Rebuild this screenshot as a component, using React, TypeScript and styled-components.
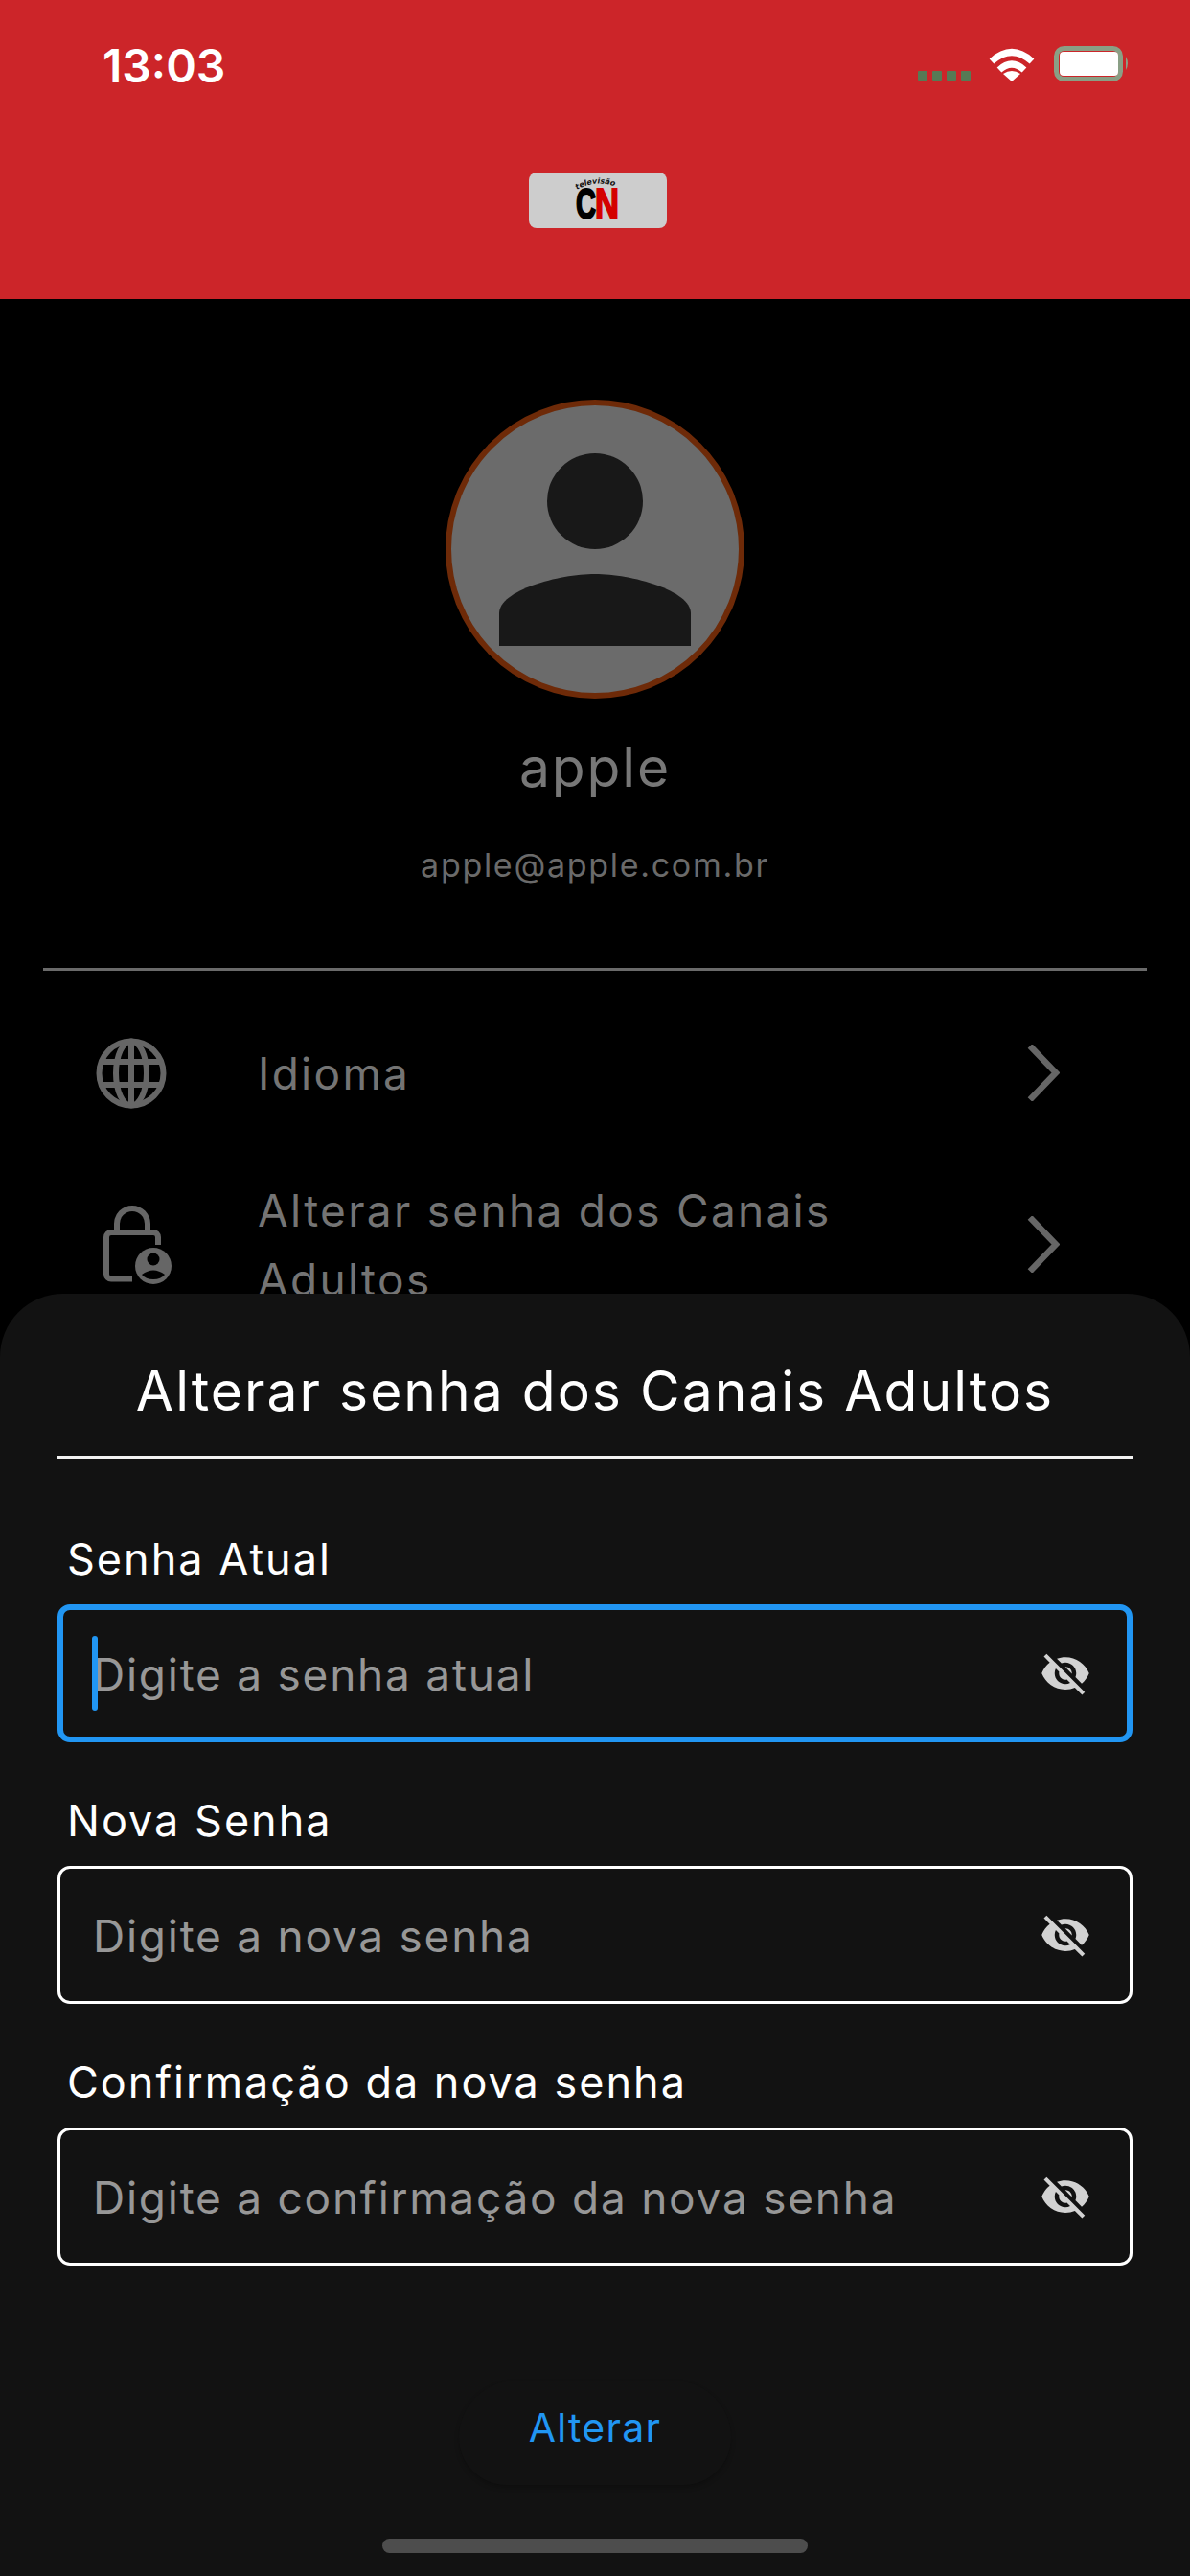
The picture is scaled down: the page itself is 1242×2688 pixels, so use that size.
import React from "react";
import styled, { createGlobalStyle } from "styled-components";

const Global = createGlobalStyle`
  html, body { margin: 0; padding: 0; background: #000; }
  * { box-sizing: border-box; }
`;

const FONT = `Inter, "Noto Sans", "Liberation Sans", sans-serif`;

const Screen = styled.div`
  position: relative;
  width: 1242px;
  height: 2688px;
  overflow: hidden;
  background: #000;
  font-family: ${FONT};
`;

const Header = styled.header`
  height: 312px;
  background: #cc2529;
  display: flex;
  flex-direction: column;
  align-items: center;
`;

const StatusBar = styled.div`
  width: 100%;
  height: 180px;
  padding: 44px 63px 0 107px;
  display: flex;
  justify-content: space-between;
  align-items: flex-start;
`;

const Time = styled.span`
  margin-top: 2px;
  font-size: 48px;
  line-height: 46px;
  font-weight: 600;
  color: #fff;
`;

const StatusIcons = styled.div`
  display: flex;
  align-items: flex-end;
  padding-top: 5px;
  height: 41px;
`;

const SignalDots = styled.div`
  display: flex;
  gap: 5px;
  margin-right: 19px;
  margin-bottom: 1px;
`;

const SignalDot = styled.i`
  width: 10px;
  height: 10px;
  border-radius: 1px;
  background: #567a55;
`;

const WifiIcon = styled.svg`
  width: 48px;
  height: 36px;
  margin-right: 20px;
`;

const BatteryIcon = styled.svg`
  width: 79px;
  height: 37px;
`;

const LogoBadge = styled.div`
  width: 144px;
  height: 58px;
  margin-left: 6px;
  border-radius: 8px;
  background: #cdcdcd;
  display: flex;
  align-items: center;
  justify-content: center;
`;

const LogoMark = styled.svg`
  width: 46px;
  height: 40px;
  overflow: visible;
`;

const Profile = styled.main`
  padding-top: 105px;
  display: flex;
  flex-direction: column;
  align-items: center;
`;

const Avatar = styled.div`
  width: 312px;
  height: 312px;
  border-radius: 50%;
  border: 6px solid #6e2a08;
  background: #6b6b6b;
  display: flex;
  align-items: center;
  justify-content: center;
`;

const Name = styled.div`
  margin-top: 37px;
  font-size: 57px;
  line-height: 70px;
  letter-spacing: 1.8px;
  color: #777;
`;

const Email = styled.div`
  margin-top: 42px;
  font-size: 34px;
  line-height: 50px;
  letter-spacing: 1.7px;
  color: #6a6a6a;
`;

const Divider = styled.hr`
  width: 1152px;
  height: 3px;
  margin: 82px 0 17px;
  border: 0;
  background: #6a6a6a;
`;

const Row = styled.div`
  width: 100%;
  height: 179px;
  padding: 0 136px 0 100px;
  display: flex;
  align-items: center;
`;

const RowIcon = styled.div<{ $inset?: number }>`
  width: 169px;
  flex: none;
  display: flex;
  padding-left: ${(p) => p.$inset ?? 0}px;
`;

const RowText = styled.div`
  flex: 1;
  font-size: 46px;
  line-height: 72px;
  letter-spacing: 2.3px;
  color: #747474;
  width: 640px;
  padding-right: 120px;
`;

const Sheet = styled.section`
  position: absolute;
  left: 0;
  right: 0;
  top: 1350px;
  bottom: 0;
  background: #121212;
  border-radius: 66px 66px 0 0;
  padding: 0 60px;
  display: flex;
  flex-direction: column;
  align-items: stretch;
`;

const SheetTitle = styled.h2`
  margin: 0;
  height: 172px;
  padding-top: 67px;
  border-bottom: 3px solid #f2f2f2;
  text-align: center;
  font-size: 57px;
  line-height: 70px;
  font-weight: 400;
  letter-spacing: 2px;
  color: #fff;
`;

const Form = styled.div`
  padding-top: 76px;
  display: flex;
  flex-direction: column;
  gap: 53px;
`;

const FieldGroup = styled.div`
  display: flex;
  flex-direction: column;
`;

const FieldLabel = styled.label`
  height: 58px;
  margin-bottom: 18px;
  padding-left: 10px;
  font-size: 45px;
  line-height: 58px;
  letter-spacing: 2px;
  color: #fff;
`;

const FieldBox = styled.div<{ $focused?: boolean }>`
  position: relative;
  height: 144px;
  border-radius: 13px;
  border: ${(p) => (p.$focused ? "6px solid #2196f3" : "3px solid #fff")};
  padding: 0 ${(p) => (p.$focused ? 37 : 40)}px 0 ${(p) => (p.$focused ? 31 : 34)}px;
  display: flex;
  align-items: center;
  justify-content: space-between;
`;

const Caret = styled.span`
  position: absolute;
  left: 30px;
  top: 27px;
  width: 6px;
  height: 78px;
  border-radius: 3px;
  background: #2196f3;
`;

const Placeholder = styled.span`
  margin-top: 1px;
  font-size: 46px;
  line-height: 56px;
  letter-spacing: 1.75px;
  color: #979797;
`;

const EyeIcon = styled.svg`
  width: 54px;
  height: 54px;
  fill: #d2d2d2;
  flex: none;
`;

const SubmitButton = styled.button`
  align-self: center;
  width: 284px;
  height: 109px;
  margin-top: 120px;
  border: 0;
  border-radius: 60px 60px 50px 50px;
  background: #121212;
  box-shadow: 0 3px 5px rgba(0, 0, 0, 0.22);
  font-family: ${FONT};
  font-size: 41px;
  letter-spacing: 1.3px;
  color: #2196f3;
  padding: 0 0 12px;
`;

const HomeBar = styled.div`
  align-self: center;
  width: 444px;
  height: 15px;
  margin-top: 56px;
  border-radius: 8px;
  background: #4d4d4d;
`;

const Eye = () => (
  <EyeIcon viewBox="0 0 24 24">
    <path d="M12 7c2.76 0 5 2.24 5 5 0 .65-.13 1.26-.36 1.83l2.92 2.92c1.51-1.26 2.7-2.89 3.43-4.75-1.73-4.39-6-7.5-11-7.5-1.4 0-2.74.25-3.98.7l2.16 2.16C10.74 7.13 11.35 7 12 7zM2 4.27l2.28 2.28.46.46C3.08 8.3 1.78 10.02 1 12c1.73 4.39 6 7.5 11 7.5 1.55 0 3.03-.3 4.38-.84l.42.42L19.73 22 21 20.73 3.27 3 2 4.27zM7.53 9.8l1.55 1.55c-.05.21-.08.43-.08.65 0 1.66 1.34 3 3 3 .22 0 .44-.03.65-.08l1.55 1.55c-.67.33-1.41.53-2.2.53-2.76 0-5-2.24-5-5 0-.79.2-1.53.53-2.2zm4.31-.78l3.15 3.15.02-.16c0-1.66-1.34-3-3-3l-.17.01z" />
  </EyeIcon>
);

const Chevron = () => (
  <svg width="34" height="59" viewBox="0 0 34 59" fill="none">
    <polyline points="3,1.5 30,29.5 3,57.5" stroke="#666" strokeWidth="6.5" />
  </svg>
);

const Globe = () => (
  <svg width="74" height="74" viewBox="0 0 74 74" fill="none" stroke="#666" strokeWidth="6">
    <circle cx="37" cy="37" r="33.5" />
    <ellipse cx="37" cy="37" rx="16" ry="33.5" />
    <line x1="37" y1="4" x2="37" y2="70" />
    <line x1="7" y1="25" x2="67" y2="25" />
    <line x1="7" y1="49" x2="67" y2="49" />
  </svg>
);

const LockUser = () => (
  <svg width="72" height="82" viewBox="0 0 72 82" fill="none">
    <path d="M14 27 V19 a16 16 0 0 1 32 0 V27" stroke="#666" strokeWidth="6" />
    <path d="M30 76.5 H8 a5 5 0 0 1 -5 -5 V33 a5 5 0 0 1 5 -5 H52 a5 5 0 0 1 5 5 V41" stroke="#666" strokeWidth="6" />
    <circle cx="52" cy="63" r="19" fill="#666" />
    <circle cx="52" cy="56" r="6.5" fill="#000" />
    <path d="M40 72 q12 -9 24 0 q-4 5 -12 5 t-12 -5 z" fill="#000" />
  </svg>
);

const Logo = () => (
  <LogoMark viewBox="0 0 46 40">
    <path id="logoArc" d="M1 9 Q22 -3 45 7" fill="none" />
    <text fontFamily="DejaVu Sans, sans-serif" fontSize="8" fontWeight="700" fontStyle="italic" fill="#111">
      <textPath href="#logoArc">televisão</textPath>
    </text>
    <text x="0" y="39" fontFamily="Liberation Sans, sans-serif" fontSize="44" fontWeight="900" fill="#000" stroke="#000" strokeWidth="2" textLength="21" lengthAdjust="spacingAndGlyphs">C</text>
    <text x="20" y="39" fontFamily="Liberation Sans, sans-serif" fontSize="44" fontWeight="900" fill="#d40000" stroke="#d40000" strokeWidth="2" textLength="25" lengthAdjust="spacingAndGlyphs">N</text>
  </LogoMark>
);

const fields = [
  { label: "Senha Atual", hint: "Digite a senha atual", focused: true },
  { label: "Nova Senha", hint: "Digite a nova senha" },
  { label: "Confirmação da nova senha", hint: "Digite a confirmação da nova senha" },
];

export default function App() {
  return (
    <Screen>
      <Global />
      <Header>
        <StatusBar>
          <Time>13:03</Time>
          <StatusIcons>
            <SignalDots>
              <SignalDot />
              <SignalDot />
              <SignalDot />
              <SignalDot />
            </SignalDots>
            <WifiIcon viewBox="0 0 48 36">
              <path d="M3 15 Q24 -4 45 15" fill="none" stroke="#fff" strokeWidth="7" />
              <path d="M11 24 Q24 12 37 24" fill="none" stroke="#fff" strokeWidth="7" />
              <path d="M15 28 Q24 22 33 28 L24 36 Z" fill="#fff" />
            </WifiIcon>
            <BatteryIcon viewBox="0 0 79 37">
              <rect x="2.5" y="2.5" width="67" height="32" rx="8" fill="none" stroke="#8a9f85" strokeWidth="5" />
              <rect x="6" y="6" width="61" height="25" rx="4" fill="#fff" />
              <path d="M75 11 q4 7 0 14 z" fill="#8a9f85" />
            </BatteryIcon>
          </StatusIcons>
        </StatusBar>
        <LogoBadge>
          <Logo />
        </LogoBadge>
      </Header>

      <Profile>
        <Avatar>
          <svg width="200" height="202" viewBox="0 0 200 202">
            <circle cx="100" cy="51" r="50" fill="#181818" />
            <path d="M0 202 V168 C0 144 62 127 100 127 C138 127 200 144 200 168 V202 Z" fill="#181818" />
          </svg>
        </Avatar>
        <Name>apple</Name>
        <Email>apple@apple.com.br</Email>
        <Divider />
        <Row>
          <RowIcon>
            <Globe />
          </RowIcon>
          <RowText>Idioma</RowText>
          <Chevron />
        </Row>
        <Row>
          <RowIcon $inset={8}>
            <LockUser />
          </RowIcon>
          <RowText>Alterar senha dos Canais Adultos</RowText>
          <Chevron />
        </Row>
      </Profile>

      <Sheet>
        <SheetTitle>Alterar senha dos Canais Adultos</SheetTitle>
        <Form>
          {fields.map((f) => (
            <FieldGroup key={f.label}>
              <FieldLabel>{f.label}</FieldLabel>
              <FieldBox $focused={f.focused}>
                {f.focused && <Caret />}
                <Placeholder>{f.hint}</Placeholder>
                <Eye />
              </FieldBox>
            </FieldGroup>
          ))}
        </Form>
        <SubmitButton>Alterar</SubmitButton>
        <HomeBar />
      </Sheet>
    </Screen>
  );
}
